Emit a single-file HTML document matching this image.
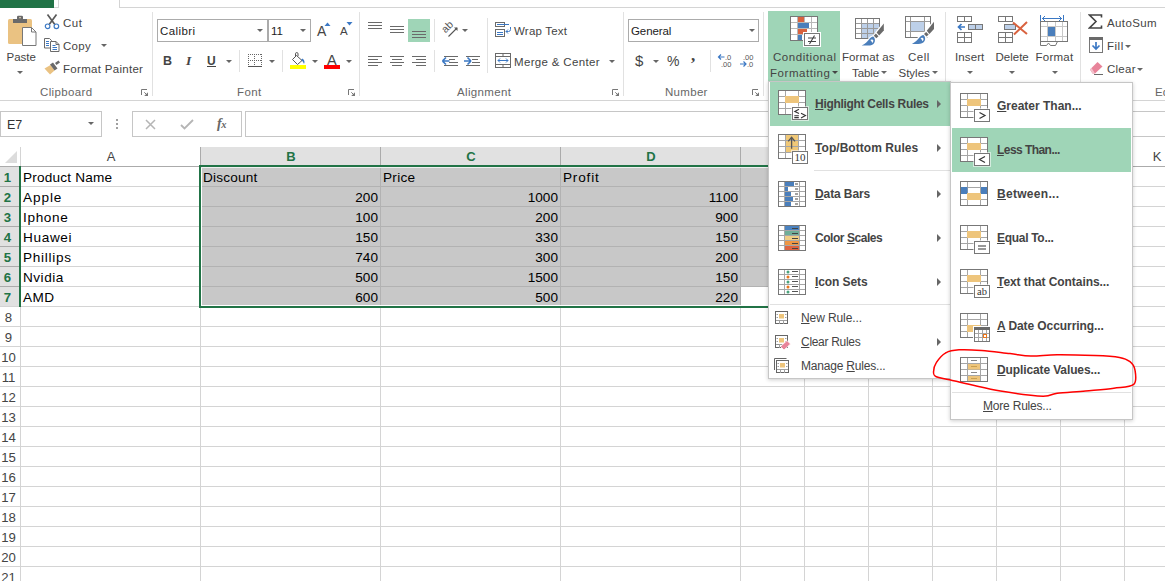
<!DOCTYPE html>
<html><head><meta charset="utf-8"><title>Excel</title>
<style>
*{box-sizing:border-box;margin:0;padding:0}
html,body{width:1165px;height:581px;overflow:hidden;background:#fff}
body{position:relative;font-family:"Liberation Sans",sans-serif;font-size:11.5px;color:#444}
.a{position:absolute}
.t{position:absolute;white-space:nowrap;line-height:14px;height:14px}
.lbl{color:#666}
.vs{position:absolute;width:1px;background:#e1e1e1}
.box{position:absolute;border:1px solid #ababab;background:#fff}
.dd{position:absolute;width:0;height:0;border-left:3px solid transparent;border-right:3px solid transparent;border-top:3px solid #666}
.cell{position:absolute;white-space:nowrap;font-size:13.6px;line-height:20px;height:20px;color:#000}
.num{text-align:right}
.rh{position:absolute;left:0;width:19px;text-align:center;font-size:13.2px;line-height:20px;height:20px;color:#444;margin-top:1px}
.rh.s{color:#217346;font-weight:bold}
.ch{position:absolute;top:147px;height:20px;line-height:20px;padding-left:2px;text-align:center;font-size:13px;color:#444}
.ch.s{color:#217346;font-weight:bold}
.menu{position:absolute;background:#fff;border:1px solid #c6c6c6;box-shadow:0 1px 4px rgba(0,0,0,.2)}
.mi{position:absolute;white-space:nowrap;line-height:16px;height:16px;font-size:12px;font-weight:bold;color:#444}
.mi u,.ms u{text-decoration:underline}
.ms{position:absolute;white-space:nowrap;line-height:16px;height:16px;font-size:12px;color:#444}
.arr{position:absolute;width:0;height:0;border-top:4px solid transparent;border-bottom:4px solid transparent;border-left:4px solid #666}
</style></head><body>
<!-- top strip -->
<div class="a" style="left:0;top:0;width:54px;height:8px;background:#217346"></div>
<div class="a" style="left:54px;top:7px;width:5px;height:1px;background:#d4d4d4"></div>
<div class="a" style="left:58px;top:0;width:1px;height:8px;background:#d4d4d4"></div>
<div class="a" style="left:119px;top:0;width:1px;height:8px;background:#d4d4d4"></div>
<div class="a" style="left:119px;top:7px;width:1046px;height:1px;background:#d4d4d4"></div>
<!-- ribbon bottom -->
<div class="a" style="left:0;top:100px;width:1165px;height:1px;background:#d4d4d4"></div>
<!-- group separators -->
<div class="vs" style="left:152px;top:12px;height:84px"></div>
<div class="vs" style="left:359px;top:12px;height:84px"></div>
<div class="vs" style="left:623px;top:12px;height:84px"></div>
<div class="vs" style="left:763px;top:12px;height:84px"></div>
<div class="vs" style="left:945px;top:12px;height:84px"></div>
<div class="vs" style="left:1080px;top:12px;height:84px"></div>
<!-- CLIPBOARD -->
<svg class="a" style="left:6px;top:15px" width="32" height="33" viewBox="0 0 32 33">
<rect x="2" y="4" width="24" height="25" rx="1.5" fill="#eac282"/>
<rect x="7" y="4" width="14" height="4" fill="#6a6a6a"/>
<rect x="11" y="0.8" width="6" height="4" rx="1.2" fill="#6a6a6a"/><rect x="13.3" y="2" width="1.4" height="1.3" fill="#f0e0c0"/>
<path d="M16.5 12.5h9l4.5 4.5v13.500h-13.500z" fill="#fff" stroke="#777" stroke-width="1"/>
<path d="M25.500 12.500v4.500h4.500" fill="none" stroke="#777" stroke-width="1"/>
</svg>
<div class="t" style="left:6.500px;top:50px;letter-spacing:0px">Paste</div>
<div class="dd" style="left:17px;top:71px"></div>
<!-- cut -->
<svg class="a" style="left:44px;top:14px" width="16" height="16" viewBox="0 0 16 16">
<path d="M3.500 0.500L10.800 10.500M12.500 0.500L5.200 10.500" stroke="#5a5a5a" stroke-width="1.700" fill="none"/>
<circle cx="3.600" cy="12.300" r="2.300" fill="#fff" stroke="#3b78c4" stroke-width="1.200"/>
<circle cx="12.400" cy="12.300" r="2.300" fill="#fff" stroke="#3b78c4" stroke-width="1.200"/>
</svg>
<div class="t" style="left:63px;top:16px;letter-spacing:.5px">Cut</div>
<!-- copy -->
<svg class="a" style="left:44px;top:38px" width="16" height="14" viewBox="0 0 16 14">
<path d="M0.500 0.500h5l2 2v7.500h-7z" fill="#fff" stroke="#6a6a6a"/>
<path d="M2 3.500h3M2 5.500h3M2 7.500h3" stroke="#3b78c4"/>
<path d="M6.500 3.500h5.500l3 3v7h-8.500z" fill="#fff" stroke="#6a6a6a"/>
<path d="M12 3.500v3h3" fill="none" stroke="#6a6a6a"/>
<path d="M8.500 7.500h3M8.500 9.500h4.500M8.500 11.500h4.500" stroke="#3b78c4"/>
</svg>
<div class="t" style="left:63px;top:39px;letter-spacing:.3px">Copy</div>
<div class="dd" style="left:100.500px;top:44px"></div>
<!-- format painter -->
<svg class="a" style="left:44px;top:60px" width="17" height="15" viewBox="0 0 17 15">
<path d="M0.500 8.500L6.500 5l4 5.500L6 14.500z" fill="#eac282"/>
<path d="M6 4.500l3-2 4.500 6-3 2z" fill="#6a6a6a"/>
<path d="M11 3l3.500-2.500 1.500 2L12.500 5z" fill="#6a6a6a"/>
</svg>
<div class="t" style="left:63px;top:62px;letter-spacing:.3px">Format Painter</div>
<div class="t lbl" style="left:40px;top:85px;letter-spacing:.35px">Clipboard</div>
<svg class="a" style="left:141px;top:89px" width="8" height="8" viewBox="0 0 8 8"><path d="M0.500 6V0.500H6" fill="none" stroke="#777"/><path d="M3.300 3.300L6 6" stroke="#777" fill="none"/><path d="M7 3.200V7H3.200z" fill="#777"/></svg>
<!-- FONT -->
<div class="box" style="left:157px;top:19px;width:111px;height:23px"></div>
<div class="box" style="left:268px;top:19px;width:43px;height:23px"></div>
<div class="t" style="left:160px;top:24px;color:#222;letter-spacing:.4px">Calibri</div>
<div class="dd" style="left:257px;top:29px"></div>
<div class="t" style="left:271px;top:24px;color:#222">11</div>
<div class="dd" style="left:300px;top:29px"></div>
<div class="t" style="left:317px;top:23px;font-size:14px;line-height:16px;height:16px">A</div>
<svg class="a" style="left:324px;top:22px" width="7" height="4"><path d="M0.500 4L3.500 0.500 6.500 4z" fill="#3b78c4"/></svg>
<div class="t" style="left:340px;top:24px;font-size:11.500px;line-height:14px">A</div>
<svg class="a" style="left:346px;top:22px" width="7" height="4"><path d="M0.500 0L3.500 3.500 6.500 0z" fill="#3b78c4"/></svg>
<div class="t" style="left:163px;top:54px;font-weight:bold;font-size:12.500px">B</div>
<div class="t" style="left:186px;top:54px;font-family:'Liberation Serif',serif;font-style:italic;font-weight:bold;font-size:13.500px">I</div>
<div class="t" style="left:207px;top:54px;font-weight:bold;font-size:12px">U</div>
<div class="a" style="left:207px;top:66px;width:9px;height:1px;background:#444"></div>
<div class="dd" style="left:226px;top:60px"></div>
<div class="vs" style="left:239px;top:50px;height:22px"></div>
<svg class="a" style="left:248px;top:54px" width="14" height="13" viewBox="0 0 14 13" shape-rendering="crispEdges">
<path d="M0 0.500h14M0 6.500h14" stroke="#666" stroke-width="1" stroke-dasharray="1 1" fill="none"/>
<path d="M0.500 0v12M6.500 0v12M13.500 0v12" stroke="#666" stroke-width="1" stroke-dasharray="1 1" fill="none"/>
<path d="M0 12.500h14" stroke="#555" stroke-width="1"/>
</svg>
<div class="dd" style="left:269px;top:60px"></div>
<div class="vs" style="left:282px;top:50px;height:22px"></div>
<svg class="a" style="left:290px;top:52px" width="17" height="17" viewBox="0 0 17 17">
<path d="M6.500 3.500L12 8.500 7.500 12.500 2.500 7.500z" fill="#fff" stroke="#555" stroke-width="1"/>
<path d="M5.500 5V1.800a1 1 0 0 1 2.500 0V4" fill="none" stroke="#555" stroke-width="1"/>
<path d="M12.500 6.500c2 1.500 2.500 3.500 1.500 5.500-0.500-1.500-1.500-3-3-4z" fill="#3b78c4"/>
<rect x="0" y="13" width="16" height="4" fill="#ffff00"/>
</svg>
<div class="dd" style="left:312px;top:60px"></div>
<div class="t" style="left:327px;top:53px;font-size:14.500px;line-height:14px">A</div>
<div class="a" style="left:324px;top:65px;width:16px;height:4px;background:#ff0000"></div>
<div class="dd" style="left:346px;top:60px"></div>
<div class="t lbl" style="left:237px;top:85px;letter-spacing:.4px">Font</div>
<svg class="a" style="left:348px;top:89px" width="8" height="8" viewBox="0 0 8 8"><path d="M0.500 6V0.500H6" fill="none" stroke="#777"/><path d="M3.300 3.300L6 6" stroke="#777" fill="none"/><path d="M7 3.200V7H3.200z" fill="#777"/></svg>
<!-- ALIGNMENT -->
<svg class="a" style="left:368px;top:19px" width="62" height="23" viewBox="0 0 62 23">
<rect x="40" y="0" width="22" height="23" fill="#9fd5b7"/>
<path d="M0 3.500h14M0 6.500h14M0 9.500h14M22 7.500h14M22 10.500h14M22 13.500h14M44 12.500h14M44 15.500h14M44 18.500h14" stroke="#6a6a6a" stroke-width="1" fill="none"/>
</svg>
<div class="vs" style="left:434px;top:19px;height:23px"></div>
<div class="vs" style="left:434px;top:50px;height:22px"></div>
<svg class="a" style="left:441px;top:21px" width="18" height="17" viewBox="0 0 18 17">
<text x="0" y="0" transform="translate(4.500 12.500) rotate(-45)" font-family="Liberation Sans, sans-serif" font-size="10.500" fill="#555">ab</text>
<path d="M7.500 15.500L16 7" stroke="#555" stroke-width="1.100" fill="none"/>
<path d="M13 6.500h3.500v3.500z" fill="#555"/>
</svg>
<div class="dd" style="left:462px;top:29px"></div>
<div class="vs" style="left:487px;top:18px;height:55px"></div>
<svg class="a" style="left:368px;top:55px" width="58" height="11" viewBox="0 0 58 11">
<path d="M0 1.500h14M0 4.500h10M0 7.500h14M0 10.500h10 M22 1.500h14M24 4.500h10M22 7.500h14M24 10.500h10 M44 1.500h14M48 4.500h10M44 7.500h14M48 10.500h10" stroke="#6a6a6a" stroke-width="1" fill="none"/>
</svg>
<svg class="a" style="left:442px;top:55px" width="38" height="11" viewBox="0 0 38 11">
<path d="M2 1.5h14M7 4.5h6M7 7.5h9M2 10.5h14 M24 1.5h14M30 4.5h6M30 7.5h8M24 10.5h14" stroke="#6a6a6a" stroke-width="1" fill="none"/>
<path d="M0.500 6L4 2.500M0.500 6L4 9.500M0.500 6H7.500" stroke="#3b78c4" stroke-width="1.600" fill="none"/>
<path d="M29 6L25.500 2.500M29 6L25.500 9.500M29 6H22" stroke="#3b78c4" stroke-width="1.600" fill="none"/>
</svg>
<!-- wrap text -->
<svg class="a" style="left:495px;top:22px" width="17" height="15" viewBox="0 0 17 15">
<rect x="0.500" y="0.500" width="9" height="4" fill="#fff" stroke="#6a6a6a"/>
<rect x="0.500" y="7.500" width="9" height="7" fill="#fff" stroke="#6a6a6a"/>
<path d="M2 2.500h12M2 10.500h6M2 12.500h6" stroke="#3b78c4" stroke-width="1"/>
<path d="M15.500 5v2.500a2 2 0 0 1-2 2H11M13 7.500L11 9.500l2 2" fill="none" stroke="#3b78c4" stroke-width="1"/>
</svg>
<div class="t" style="left:514px;top:23.500px;letter-spacing:.2px">Wrap Text</div>
<svg class="a" style="left:495px;top:53px" width="16" height="15" viewBox="0 0 16 15">
<rect x="0.500" y="0.500" width="15" height="14" fill="#fff" stroke="#6a6a6a"/>
<path d="M0.500 3.500h15M0.500 11.500h15M8 0.500v3M8 11.500v3" stroke="#6a6a6a" fill="none"/>
<path d="M3 7.500h10M5 5.500L3 7.500l2 2M11 5.500l2 2-2 2" stroke="#3b78c4" fill="none"/>
</svg>
<div class="t" style="left:514px;top:54.500px;letter-spacing:.33px">Merge &amp; Center</div>
<div class="dd" style="left:609px;top:60px"></div>
<div class="t lbl" style="left:457px;top:85px;letter-spacing:.35px">Alignment</div>
<svg class="a" style="left:612px;top:89px" width="8" height="8" viewBox="0 0 8 8"><path d="M0.500 6V0.500H6" fill="none" stroke="#777"/><path d="M3.300 3.300L6 6" stroke="#777" fill="none"/><path d="M7 3.200V7H3.200z" fill="#777"/></svg>
<!-- NUMBER -->
<div class="box" style="left:628px;top:19px;width:131px;height:23px"></div>
<div class="t" style="left:631px;top:23.500px;color:#222;letter-spacing:-.1px">General</div>
<div class="dd" style="left:749px;top:29px"></div>
<div class="t" style="left:635px;top:53px;font-size:15px;line-height:16px;height:16px">$</div>
<div class="dd" style="left:653px;top:60px"></div>
<div class="t" style="left:667px;top:53px;font-size:14px;line-height:16px;height:16px;letter-spacing:-1px">%</div>
<div class="t" style="left:691px;top:48px;font-size:17px;line-height:16px;height:16px;font-weight:bold;font-family:'Liberation Serif',serif">,</div>
<div class="vs" style="left:710px;top:50px;height:22px"></div>
<svg class="a" style="left:717px;top:53px" width="40" height="16" viewBox="0 0 40 16">
<g font-family="Liberation Sans, sans-serif" font-size="7.500" fill="#555">
<text x="8" y="7">.0</text><text x="4" y="14">.00</text>
<text x="26" y="7">.00</text><text x="30" y="14">.0</text></g>
<path d="M1.500 4H7.500M4 1.500L1.500 4 4 6.500" stroke="#3b78c4" stroke-width="1.200" fill="none"/>
<path d="M23 11H29M26.500 8.500L29 11l-2.500 2.500" stroke="#3b78c4" stroke-width="1.200" fill="none"/>
</svg>
<div class="t lbl" style="left:665px;top:85px;letter-spacing:.3px">Number</div>
<svg class="a" style="left:752px;top:89px" width="8" height="8" viewBox="0 0 8 8"><path d="M0.500 6V0.500H6" fill="none" stroke="#777"/><path d="M3.300 3.300L6 6" stroke="#777" fill="none"/><path d="M7 3.200V7H3.200z" fill="#777"/></svg>
<!-- STYLES -->
<div class="a" style="left:768px;top:11px;width:72px;height:72px;background:#9fd5b7"></div>
<svg class="a" style="left:789px;top:15px" width="33" height="32" viewBox="0 0 33 32">
<rect x="1.500" y="1.500" width="27" height="24" fill="#fff" stroke="#777"/>
<path d="M8.500 2v23M15.500 2v23M22.500 2v23M2 7.500h26M2 13.500h26M2 19.500h26" stroke="#b8b8b8" fill="none"/>
<rect x="9" y="2" width="6" height="5" fill="#d9623f"/>
<rect x="9" y="8" width="11" height="5" fill="#4a7ebb"/>
<rect x="9" y="14" width="9" height="5" fill="#d9623f"/>
<rect x="9" y="20" width="4" height="5" fill="#4a7ebb"/>
<rect x="14" y="17" width="18" height="15" fill="#fff"/>
<rect x="15.500" y="18.500" width="15" height="12" fill="#fff" stroke="#777"/>
<path d="M19 23h8M19 26.500h8M25.500 20.500L20.500 29" stroke="#444" stroke-width="1.100" fill="none"/>
</svg>
<div class="t" style="left:773px;top:50px;letter-spacing:.55px">Conditional</div>
<div class="t" style="left:770px;top:66px;letter-spacing:.55px">Formatting</div>
<div class="dd" style="left:832px;top:71px;border-top-color:#444"></div>
<!-- format as table -->
<svg class="a" style="left:854px;top:17px" width="32" height="30" viewBox="0 0 32 30">
<rect x="1.500" y="1.500" width="24" height="20" fill="#fff" stroke="#777"/>
<rect x="8" y="7" width="17" height="14" fill="#bdd0e9"/>
<path d="M7.500 2v19M13.500 2v19M19.500 2v19M2 6.500h23M2 11.500h23M2 16.500h23" stroke="#999" fill="none"/>
<rect x="22.500" y="18" width="4" height="4.500" fill="#fff"/><g stroke="#fff" stroke-width="2.600" stroke-linejoin="round" fill="#fff"><polygon points="29.8 6.5 29.8 13.6 25.2 18.6 22.6 15.5"/><polygon points="21.9 16.6 24.5 19.2 22.3 21.3 19.8 18.8"/><path d="M19.3 19.6C21.0 21.0 21.6 24.0 20.2 26.0C19.0 28.0 17.0 28.6 14.0 28.6H7.7C11.0 27.0 13.5 24.5 15.0 22.5C16.2 21.0 17.5 19.8 19.3 19.6z"/></g>
<polygon points="29.8 6.5 29.8 13.6 25.2 18.6 22.6 15.5" fill="#6a6a6a"/>
<polygon points="21.9 16.6 24.5 19.2 22.3 21.3 19.8 18.8" fill="#6a6a6a"/>
<path d="M19.3 19.6C21.0 21.0 21.6 24.0 20.2 26.0C19.0 28.0 17.0 28.6 14.0 28.6H7.7C11.0 27.0 13.5 24.5 15.0 22.5C16.2 21.0 17.5 19.8 19.3 19.6z" fill="#4a7ebb"/>
<path d="M16.2 23.0c1.200-1 2.800-0.600 3.200 0.600 0 1-0.400 1.800-1.200 2.300-0.400-1.300-1-2.200-2-2.900z" fill="#fff"/>
</svg>
<div class="t" style="left:842px;top:50px;letter-spacing:.1px">Format as</div>
<div class="t" style="left:852px;top:66px;letter-spacing:-.1px">Table</div>
<div class="dd" style="left:881px;top:71px"></div>
<!-- cell styles -->
<svg class="a" style="left:904px;top:15px" width="32" height="31" viewBox="0 0 32 31">
<rect x="1.500" y="1.500" width="25" height="21" fill="#fff" stroke="#777"/>
<rect x="7" y="7" width="13" height="9" fill="#bdd0e9"/>
<path d="M6.500 2v20M20.500 2v20M2 6.500h24M2 16.500h24" stroke="#999" fill="none"/>
<rect x="23.500" y="19" width="4" height="4.500" fill="#fff"/><g stroke="#fff" stroke-width="2.600" stroke-linejoin="round" fill="#fff"><polygon points="30.0 6.8 30.0 13.9 25.4 18.9 22.8 15.8"/><polygon points="22.1 16.9 24.7 19.5 22.5 21.6 20.0 19.1"/><path d="M19.5 19.9C21.2 21.3 21.8 24.3 20.4 26.3C19.2 28.3 17.2 28.9 14.2 28.9H7.9C11.2 27.3 13.7 24.8 15.2 22.8C16.4 21.3 17.7 20.1 19.5 19.9z"/></g>
<polygon points="30.0 6.8 30.0 13.9 25.4 18.9 22.8 15.8" fill="#6a6a6a"/>
<polygon points="22.1 16.9 24.7 19.5 22.5 21.6 20.0 19.1" fill="#6a6a6a"/>
<path d="M19.5 19.9C21.2 21.3 21.8 24.3 20.4 26.3C19.2 28.3 17.2 28.9 14.2 28.9H7.9C11.2 27.3 13.7 24.8 15.2 22.8C16.4 21.3 17.7 20.1 19.5 19.9z" fill="#4a7ebb"/>
<path d="M16.4 23.3c1.200-1 2.800-0.600 3.200 0.600 0 1-0.400 1.800-1.200 2.300-0.400-1.300-1-2.200-2-2.900z" fill="#fff"/>
</svg>
<div class="t" style="left:908px;top:50px;letter-spacing:.5px">Cell</div>
<div class="t" style="left:898.500px;top:66px;letter-spacing:0px">Styles</div>
<div class="dd" style="left:932px;top:71px"></div>
<!-- CELLS -->
<svg class="a" style="left:956px;top:15px" width="28" height="29" viewBox="0 0 28 29">
<rect x="1.500" y="1.500" width="14" height="5" fill="#fff" stroke="#777"/><path d="M8.500 2v5" stroke="#777"/>
<rect x="12.500" y="9.500" width="14" height="5" fill="#bdd0e9" stroke="#777"/><path d="M19.500 10v5" stroke="#777"/>
<rect x="1.500" y="17.500" width="14" height="10" fill="#fff" stroke="#777"/><path d="M8.500 18v10M2 22.500h14" stroke="#777"/>
<path d="M2.500 12H9M5.500 9L2.500 12l3 3" stroke="#3b78c4" stroke-width="1.700" fill="none"/>
</svg>
<div class="t" style="left:955px;top:50px;letter-spacing:.1px">Insert</div>
<div class="dd" style="left:967px;top:71px"></div>
<svg class="a" style="left:997px;top:15px" width="32" height="29" viewBox="0 0 32 29">
<rect x="1.500" y="1.500" width="14" height="5" fill="#fff" stroke="#777"/><path d="M8.500 2v5" stroke="#777"/>
<rect x="7.500" y="9.500" width="11" height="5" fill="#bdd0e9" stroke="#777"/>
<rect x="1.500" y="17.500" width="14" height="10" fill="#fff" stroke="#777"/><path d="M8.500 18v10M2 22.500h14" stroke="#777"/>
<path d="M16 7.500L30 19M30 7L17 19.500" stroke="#d9623f" stroke-width="2" fill="none"/>
</svg>
<div class="t" style="left:995.500px;top:50px;letter-spacing:0px">Delete</div>
<div class="dd" style="left:1009px;top:71px"></div>
<svg class="a" style="left:1039px;top:14px" width="30" height="32" viewBox="0 0 30 32">
<path d="M1.5 1v7M24.5 1v7M3 4.5h20M6 2L3.500 4.5l2.500 2.500M20 2L22.500 4.5l-2.500 2.500" stroke="#3b78c4" stroke-width="1" fill="none"/>
<rect x="1.500" y="7.500" width="27" height="20" fill="#fff" stroke="#777"/>
<path d="M8.500 8v19M16.500 8v19M23.500 8v19M2 12.500h26M2 22.500h26" stroke="#c8c8c8" fill="none"/>
<rect x="9" y="13" width="7" height="9" fill="#4a7ebb"/>
<path d="M1.500 27.500v4h6l2-2.500 2 2.500h5l2-4" stroke="#777" fill="none"/>
</svg>
<div class="t" style="left:1035.500px;top:50px;letter-spacing:.25px">Format</div>
<div class="dd" style="left:1052px;top:71px"></div>
<!-- EDITING -->
<svg class="a" style="left:1088px;top:14px" width="15" height="15" viewBox="0 0 15 15">
<path d="M13.500 3.500V1H1.500L8 7.500 1.500 14H13.500V11.500" stroke="#444" stroke-width="1.600" fill="none" stroke-linejoin="miter"/>
</svg>
<div class="t" style="left:1107px;top:16px;letter-spacing:.4px">AutoSum</div>
<svg class="a" style="left:1089px;top:37px" width="14" height="16" viewBox="0 0 14 16">
<rect x="0.500" y="0.500" width="13" height="15" fill="#fff" stroke="#777"/>
<rect x="0" y="0" width="14" height="3" fill="#6a6a6a"/>
<path d="M7 5v7M3.500 8.500L7 12l3.500-3.500" stroke="#3b78c4" stroke-width="1.700" fill="none"/>
</svg>
<div class="t" style="left:1107px;top:39px;letter-spacing:.5px">Fill</div>
<div class="dd" style="left:1124.500px;top:44.500px"></div>
<svg class="a" style="left:1089px;top:61px" width="15" height="14" viewBox="0 0 15 14">
<path d="M1 8.500L8.500 1l5 4.500L6 12.500H3.500z" fill="#e8849a"/>
<path d="M1 8.500l2.500 4H6L2.500 7z" fill="#f4c3cd"/>
<path d="M5 13.500h9" stroke="#6a6a6a"/>
</svg>
<div class="t" style="left:1107px;top:62px;letter-spacing:.25px">Clear</div>
<div class="dd" style="left:1137px;top:68px"></div>
<div class="t lbl" style="left:1155px;top:85px">Editing</div>



<div class="box" style="left:0px;top:111px;width:102px;height:26px;border-color:#c6c6c6"></div>
<div class="t" style="left:7px;top:117.500px;font-size:12.500px;color:#333">E7</div>
<div class="dd" style="left:88px;top:122px;border-left-width:3.500px;border-right-width:3.500px;border-top-width:3.500px"></div>
<div class="a" style="left:116px;top:119px;width:2px;height:2px;background:#a0a0a0;box-shadow:0 4px 0 #a0a0a0,0 8px 0 #a0a0a0"></div>
<div class="box" style="left:132px;top:111px;width:110px;height:26px;border-color:#c6c6c6"></div>
<svg class="a" style="left:145px;top:119px" width="11" height="11" viewBox="0 0 11 11"><path d="M1 1l9 9M10 1l-9 9" stroke="#b5b5b5" stroke-width="1.500" fill="none"/></svg>
<svg class="a" style="left:180px;top:119px" width="14" height="11" viewBox="0 0 14 11"><path d="M1 6l3.500 3.500L13 1" stroke="#b5b5b5" stroke-width="1.800" fill="none"/></svg>
<div class="t" style="left:217px;top:116px;font-family:'Liberation Serif',serif;font-style:italic;font-weight:bold;font-size:14px;line-height:16px;height:16px;color:#666;letter-spacing:-.5px">f<span style="font-size:10.500px">x</span></div>
<div class="box" style="left:245px;top:111px;width:930px;height:26px;border-color:#c6c6c6"></div>

<div class="a" style="left:200px;top:147px;width:568px;height:18px;background:#e1e1e1"></div>
<div class="a" style="left:0;top:167px;width:19px;height:140px;background:#e1e1e1"></div>
<div class="a" style="left:202px;top:168px;width:566px;height:137px;background:#c8c8c8"></div>
<div class="a" style="left:741px;top:287px;width:40px;height:19px;background:#fff"></div>
<div class="a" style="left:0;top:186px;width:1165px;height:1px;background:#d4d4d4"></div>
<div class="a" style="left:0;top:206px;width:1165px;height:1px;background:#d4d4d4"></div>
<div class="a" style="left:0;top:226px;width:1165px;height:1px;background:#d4d4d4"></div>
<div class="a" style="left:0;top:246px;width:1165px;height:1px;background:#d4d4d4"></div>
<div class="a" style="left:0;top:266px;width:1165px;height:1px;background:#d4d4d4"></div>
<div class="a" style="left:0;top:286px;width:1165px;height:1px;background:#d4d4d4"></div>
<div class="a" style="left:0;top:306px;width:1165px;height:1px;background:#d4d4d4"></div>
<div class="a" style="left:0;top:326px;width:1165px;height:1px;background:#d4d4d4"></div>
<div class="a" style="left:0;top:346px;width:1165px;height:1px;background:#d4d4d4"></div>
<div class="a" style="left:0;top:366px;width:1165px;height:1px;background:#d4d4d4"></div>
<div class="a" style="left:0;top:386px;width:1165px;height:1px;background:#d4d4d4"></div>
<div class="a" style="left:0;top:406px;width:1165px;height:1px;background:#d4d4d4"></div>
<div class="a" style="left:0;top:426px;width:1165px;height:1px;background:#d4d4d4"></div>
<div class="a" style="left:0;top:446px;width:1165px;height:1px;background:#d4d4d4"></div>
<div class="a" style="left:0;top:466px;width:1165px;height:1px;background:#d4d4d4"></div>
<div class="a" style="left:0;top:486px;width:1165px;height:1px;background:#d4d4d4"></div>
<div class="a" style="left:0;top:506px;width:1165px;height:1px;background:#d4d4d4"></div>
<div class="a" style="left:0;top:526px;width:1165px;height:1px;background:#d4d4d4"></div>
<div class="a" style="left:0;top:546px;width:1165px;height:1px;background:#d4d4d4"></div>
<div class="a" style="left:0;top:566px;width:1165px;height:1px;background:#d4d4d4"></div>
<div class="a" style="left:0;top:586px;width:1165px;height:1px;background:#d4d4d4"></div>
<div class="a" style="left:202px;top:186px;width:566px;height:1px;background:#b2b2b2"></div>
<div class="a" style="left:0;top:186px;width:19px;height:1px;background:#ababab"></div>
<div class="a" style="left:202px;top:206px;width:566px;height:1px;background:#b2b2b2"></div>
<div class="a" style="left:0;top:206px;width:19px;height:1px;background:#ababab"></div>
<div class="a" style="left:202px;top:226px;width:566px;height:1px;background:#b2b2b2"></div>
<div class="a" style="left:0;top:226px;width:19px;height:1px;background:#ababab"></div>
<div class="a" style="left:202px;top:246px;width:566px;height:1px;background:#b2b2b2"></div>
<div class="a" style="left:0;top:246px;width:19px;height:1px;background:#ababab"></div>
<div class="a" style="left:202px;top:266px;width:566px;height:1px;background:#b2b2b2"></div>
<div class="a" style="left:0;top:266px;width:19px;height:1px;background:#ababab"></div>
<div class="a" style="left:202px;top:286px;width:566px;height:1px;background:#b2b2b2"></div>
<div class="a" style="left:0;top:286px;width:19px;height:1px;background:#ababab"></div>
<div class="a" style="left:200px;top:167px;width:1px;height:414px;background:#d4d4d4"></div>
<div class="a" style="left:380px;top:167px;width:1px;height:414px;background:#d4d4d4"></div>
<div class="a" style="left:560px;top:167px;width:1px;height:414px;background:#d4d4d4"></div>
<div class="a" style="left:740px;top:167px;width:1px;height:414px;background:#d4d4d4"></div>
<div class="a" style="left:804px;top:167px;width:1px;height:414px;background:#d4d4d4"></div>
<div class="a" style="left:868px;top:167px;width:1px;height:414px;background:#d4d4d4"></div>
<div class="a" style="left:932px;top:167px;width:1px;height:414px;background:#d4d4d4"></div>
<div class="a" style="left:996px;top:167px;width:1px;height:414px;background:#d4d4d4"></div>
<div class="a" style="left:1060px;top:167px;width:1px;height:414px;background:#d4d4d4"></div>
<div class="a" style="left:1124px;top:167px;width:1px;height:414px;background:#d4d4d4"></div>
<div class="a" style="left:380px;top:168px;width:1px;height:137px;background:#b2b2b2"></div>
<div class="a" style="left:380px;top:147px;width:1px;height:18px;background:#ababab"></div>
<div class="a" style="left:560px;top:168px;width:1px;height:137px;background:#b2b2b2"></div>
<div class="a" style="left:560px;top:147px;width:1px;height:18px;background:#ababab"></div>
<div class="a" style="left:740px;top:168px;width:1px;height:137px;background:#b2b2b2"></div>
<div class="a" style="left:740px;top:147px;width:1px;height:18px;background:#ababab"></div>
<div class="a" style="left:200px;top:147px;width:1px;height:18px;background:#ababab"></div>
<div class="a" style="left:1124px;top:147px;width:1px;height:19px;background:#d4d4d4"></div>
<div class="a" style="left:20px;top:147px;width:1px;height:434px;background:#d4d4d4"></div>
<div class="a" style="left:0;top:166px;width:1165px;height:1px;background:#ababab"></div>
<div class="a" style="left:200px;top:165px;width:569px;height:2px;background:#217346"></div>
<div class="a" style="left:19px;top:166px;width:2px;height:141px;background:#217346"></div>
<div class="a" style="left:201px;top:167px;width:1px;height:139px;background:#fff"></div>
<div class="a" style="left:201px;top:305px;width:567px;height:1px;background:#fff"></div>
<div class="a" style="left:201px;top:167px;width:567px;height:1px;background:#f0f0f0"></div>
<div class="a" style="left:199px;top:165px;width:2px;height:143px;background:#217346"></div>
<div class="a" style="left:199px;top:306px;width:570px;height:2px;background:#217346"></div>
<svg class="a" style="left:5px;top:150px" width="13" height="14"><polygon points="12,1 12,13 0,13" fill="#dcdcdc"/></svg>
<div class="ch" style="left:20px;width:180px">A</div>
<div class="ch s" style="left:200px;width:180px">B</div>
<div class="ch s" style="left:380px;width:180px">C</div>
<div class="ch s" style="left:560px;width:180px">D</div>
<div class="ch" style="left:1124px;width:64px">K</div>
<div class="rh s" style="top:167px;width:15px">1</div>
<div class="rh s" style="top:187px;width:15px">2</div>
<div class="rh s" style="top:207px;width:15px">3</div>
<div class="rh s" style="top:227px;width:15px">4</div>
<div class="rh s" style="top:247px;width:15px">5</div>
<div class="rh s" style="top:267px;width:15px">6</div>
<div class="rh s" style="top:287px;width:15px">7</div>
<div class="rh" style="top:307px;width:17px">8</div>
<div class="rh" style="top:327px;width:17px">9</div>
<div class="rh" style="top:347px;width:17px">10</div>
<div class="rh" style="top:367px;width:17px">11</div>
<div class="rh" style="top:387px;width:17px">12</div>
<div class="rh" style="top:407px;width:17px">13</div>
<div class="rh" style="top:427px;width:17px">14</div>
<div class="rh" style="top:447px;width:17px">15</div>
<div class="rh" style="top:467px;width:17px">16</div>
<div class="rh" style="top:487px;width:17px">17</div>
<div class="rh" style="top:507px;width:17px">18</div>
<div class="rh" style="top:527px;width:17px">19</div>
<div class="rh" style="top:547px;width:17px">20</div>
<div class="rh" style="top:567px;width:17px">21</div>
<div class="cell" style="left:23px;top:168px;letter-spacing:0.2px">Product Name</div>
<div class="cell" style="left:203px;top:168px;letter-spacing:0.2px">Discount</div>
<div class="cell" style="left:383px;top:168px;letter-spacing:0.3px">Price</div>
<div class="cell" style="left:563px;top:168px;letter-spacing:0.8px">Profit</div>
<div class="cell" style="left:23px;top:188px;letter-spacing:0.9px">Apple</div>
<div class="cell num" style="left:200px;top:188px;width:178px">200</div>
<div class="cell num" style="left:380px;top:188px;width:178px">1000</div>
<div class="cell num" style="left:560px;top:188px;width:178px">1100</div>
<div class="cell" style="left:23px;top:208px;letter-spacing:0.65px">Iphone</div>
<div class="cell num" style="left:200px;top:208px;width:178px">100</div>
<div class="cell num" style="left:380px;top:208px;width:178px">200</div>
<div class="cell num" style="left:560px;top:208px;width:178px">900</div>
<div class="cell" style="left:23px;top:228px;letter-spacing:0.65px">Huawei</div>
<div class="cell num" style="left:200px;top:228px;width:178px">150</div>
<div class="cell num" style="left:380px;top:228px;width:178px">330</div>
<div class="cell num" style="left:560px;top:228px;width:178px">150</div>
<div class="cell" style="left:23px;top:248px;letter-spacing:0.7px">Phillips</div>
<div class="cell num" style="left:200px;top:248px;width:178px">740</div>
<div class="cell num" style="left:380px;top:248px;width:178px">300</div>
<div class="cell num" style="left:560px;top:248px;width:178px">200</div>
<div class="cell" style="left:23px;top:268px;letter-spacing:0.5px">Nvidia</div>
<div class="cell num" style="left:200px;top:268px;width:178px">500</div>
<div class="cell num" style="left:380px;top:268px;width:178px">1500</div>
<div class="cell num" style="left:560px;top:268px;width:178px">150</div>
<div class="cell" style="left:23px;top:288px;letter-spacing:0.4px">AMD</div>
<div class="cell num" style="left:200px;top:288px;width:178px">600</div>
<div class="cell num" style="left:380px;top:288px;width:178px">500</div>
<div class="cell num" style="left:560px;top:288px;width:178px">220</div>
<div class="menu" style="left:768px;top:81px;width:183px;height:298px"></div>
<div class="a" style="left:770px;top:82px;width:180px;height:44px;background:#9fd5b7"></div>
<svg class="a" style="left:778px;top:90px" width="32" height="31" viewBox="0 0 32 31"><rect x="0.500" y="0.500" width="27" height="24" fill="#fff" stroke="#777"/><path d="M7.500 1v24M20.500 1v24M1 6.500h27M1 12.500h27M1 18.500h27" stroke="#a6a6a6" fill="none"/><rect x="7" y="6" width="14" height="7" fill="#eec57c"/><rect x="0.500" y="0.500" width="27" height="24" fill="none" stroke="#777"/><g transform="translate(0 1)"><rect x="13" y="15" width="18" height="15" fill="#fff" fill-opacity=".55"/><rect x="14.500" y="16.500" width="15" height="12" fill="#fff" stroke="#777"/><path d="M21 18.300L16.800 20.400 21 22.600M16.300 24.800h4.500M16.300 26.600h4.500M23 22.300L27.500 24.600 23 26.900" stroke="#333" fill="none" stroke-width="1.100"/></g></svg>
<svg class="a" style="left:778px;top:134px" width="32" height="31" viewBox="0 0 32 31"><rect x="0.500" y="0.500" width="27" height="24" fill="#fff" stroke="#777"/><rect x="7.500" y="1" width="13" height="17.500" fill="#f0c877"/><path d="M7.500 1v24M20.500 1v24M1 6.500h27M1 12.500h27M1 18.500h27" stroke="#a6a6a6" fill="none"/><rect x="0.500" y="0.500" width="27" height="24" fill="none" stroke="#777"/><path d="M13.600 14.700V3.500M10.200 7.400L13.600 3.300 17 7.400" stroke="#555" stroke-width="1.300" fill="none"/><rect x="13" y="16" width="18" height="15" fill="#fff" fill-opacity=".55"/><rect x="14.500" y="17.500" width="15" height="12" fill="#fff" stroke="#777"/><text x="22" y="27.300" text-anchor="middle" font-family="Liberation Serif, serif" font-size="11" fill="#333">10</text></svg>
<svg class="a" style="left:778px;top:181px" width="29" height="27" viewBox="0 0 29 27"><rect x="0.500" y="0.500" width="27" height="25" fill="#fff" stroke="#777"/><rect x="7" y="1" width="9" height="4.500" fill="#4a7ebb"/><path d="M17 3h3" stroke="#444"/><rect x="7" y="6" width="3" height="4.500" fill="#4a7ebb"/><path d="M17 8h3" stroke="#444"/><rect x="7" y="11" width="6" height="4.500" fill="#4a7ebb"/><path d="M17 13h3" stroke="#444"/><rect x="7" y="16" width="8" height="4.500" fill="#4a7ebb"/><path d="M17 18h3" stroke="#444"/><rect x="7" y="21" width="6" height="4.500" fill="#4a7ebb"/><path d="M17 23h3" stroke="#444"/><path d="M6.500 1v25M21.500 1v25M1 5.500h27M1 10.500h27M1 15.500h27M1 20.500h27" stroke="#a6a6a6" fill="none"/><rect x="0.500" y="0.500" width="27" height="25" fill="none" stroke="#777"/></svg>
<svg class="a" style="left:778px;top:225px" width="29" height="27" viewBox="0 0 29 27"><rect x="0.500" y="0.500" width="27" height="25" fill="#fff" stroke="#777"/><rect x="7" y="1" width="14.500" height="4.500" fill="#4a82c0"/><path d="M14 3.5h6" stroke="#444"/><rect x="7" y="6" width="14.500" height="4.500" fill="#6fae98"/><path d="M14 8.5h6" stroke="#444"/><rect x="7" y="11" width="14.500" height="4.500" fill="#f0cd84"/><path d="M14 13.5h6" stroke="#444"/><rect x="7" y="16" width="14.500" height="4.500" fill="#ee9644"/><path d="M14 18.5h6" stroke="#444"/><rect x="7" y="21" width="14.500" height="4.500" fill="#dd6340"/><path d="M14 23.5h6" stroke="#444"/><path d="M6.500 1v25M21.500 1v25M1 5.500h27M1 10.500h27M1 15.500h27M1 20.500h27" stroke="#a6a6a6" fill="none"/><rect x="0.500" y="0.500" width="27" height="25" fill="none" stroke="#777"/></svg>
<svg class="a" style="left:778px;top:269px" width="29" height="27" viewBox="0 0 29 27"><rect x="0.500" y="0.500" width="27" height="25" fill="#fff" stroke="#777"/><circle cx="10" cy="3" r="1.500" fill="#4aa37c"/><path d="M14 2.5h6" stroke="#555"/><circle cx="10" cy="8" r="1.500" fill="#e8761c"/><path d="M14 7.5h6" stroke="#555"/><circle cx="10" cy="13" r="1.500" fill="#4aa37c"/><path d="M14 12.5h6" stroke="#555"/><circle cx="10" cy="18" r="1.500" fill="#e8761c"/><path d="M14 17.5h6" stroke="#555"/><circle cx="10" cy="23" r="1.500" fill="#4aa37c"/><path d="M14 22.5h6" stroke="#555"/><path d="M6.500 1v25M21.500 1v25M1 5.500h27M1 10.500h27M1 15.500h27M1 20.500h27" stroke="#a6a6a6" fill="none"/><rect x="0.500" y="0.500" width="27" height="25" fill="none" stroke="#777"/></svg>
<div class="mi" style="left:815px;top:96px;letter-spacing:-0.3px"><u>H</u>ighlight Cells Rules</div>
<div class="arr" style="left:937px;top:100px"></div>
<div class="mi" style="left:815px;top:140px;letter-spacing:0.05px"><u>T</u>op/Bottom Rules</div>
<div class="arr" style="left:937px;top:144px"></div>
<div class="mi" style="left:815px;top:186px;letter-spacing:-0.1px"><u>D</u>ata Bars</div>
<div class="arr" style="left:937px;top:190px"></div>
<div class="mi" style="left:815px;top:230px;letter-spacing:-0.45px">Color <u>S</u>cales</div>
<div class="arr" style="left:937px;top:234px"></div>
<div class="mi" style="left:815px;top:274px;letter-spacing:-0.1px"><u>I</u>con Sets</div>
<div class="arr" style="left:937px;top:278px"></div>
<div class="a" style="left:814px;top:170px;width:136px;height:1px;background:#e1e1e1"></div>
<div class="a" style="left:770px;top:304px;width:180px;height:1px;background:#e1e1e1"></div>
<svg class="a" style="left:774px;top:311px" width="18" height="17" viewBox="0 0 18 17"><rect x="1.5" y="0.5" width="12" height="12" fill="#fff" stroke="#666"/><rect x="5" y="3" width="5" height="4.500" fill="#eec57c"/><path d="M2 9.5h11M5.5 9.5v3.500M9.5 9.5v3.500" stroke="#a0a0a0" fill="none"/><path d="M2.5 3.5h1.500M2.5 6.5h1.500M11 3.5h1.500M11 6.5h1.500" stroke="#a0a0a0" fill="none"/></svg>
<svg class="a" style="left:774px;top:335px" width="18" height="17" viewBox="0 0 18 17"><rect x="1.5" y="0.5" width="12" height="12" fill="#fff" stroke="#666"/><rect x="5" y="3" width="5" height="4.500" fill="#eec57c"/><path d="M2 9.5h11M5.5 9.5v3.500M9.5 9.5v3.500" stroke="#a0a0a0" fill="none"/><path d="M2.5 3.5h1.500M2.5 6.5h1.500M11 3.5h1.500M11 6.5h1.500" stroke="#a0a0a0" fill="none"/><path d="M3.500 9.500h1M4 9v1" stroke="#888" fill="none" stroke-width=".8"/><path d="M6.500 11.500l6.500-6 3.500 3.500-6.500 6z" fill="#e8849a" stroke="#fff" stroke-width=".8"/></svg>
<svg class="a" style="left:774px;top:358px" width="18" height="17" viewBox="0 0 18 17"><path d="M0.500 12V0.500H12.500" stroke="#666" fill="none"/><rect x="2.5" y="2.5" width="12" height="12" fill="#fff" stroke="#666"/><rect x="6" y="5" width="5" height="4.500" fill="#eec57c"/><path d="M3 11.5h11M6.5 11.5v3.500M10.5 11.5v3.500" stroke="#a0a0a0" fill="none"/><path d="M3.5 5.5h1.500M3.5 8.5h1.500M12 5.5h1.500M12 8.5h1.500" stroke="#a0a0a0" fill="none"/></svg>
<div class="ms" style="left:801px;top:310px;letter-spacing:-0.1px"><u>N</u>ew Rule...</div>
<div class="ms" style="left:801px;top:334px;letter-spacing:-0.3px"><u>C</u>lear Rules</div>
<div class="ms" style="left:801px;top:358px;letter-spacing:-0.2px">Manage <u>R</u>ules...</div>
<div class="arr" style="left:937px;top:338px"></div>
<div class="menu" style="left:950px;top:82px;width:183px;height:338px"></div>
<div class="a" style="left:952px;top:128px;width:179px;height:44px;background:#9fd5b7"></div>
<svg class="a" style="left:960px;top:93px" width="32" height="31" viewBox="0 0 32 31"><rect x="0.500" y="0.500" width="27" height="24" fill="#fff" stroke="#777"/><path d="M7.500 1v24M20.500 1v24M1 6.500h27M1 12.500h27M1 18.500h27" stroke="#a6a6a6" fill="none"/><rect x="7" y="6" width="14" height="7" fill="#eec57c"/><rect x="0.500" y="0.500" width="27" height="24" fill="none" stroke="#777"/><g transform="translate(0 0)"><rect x="13" y="15" width="18" height="15" fill="#fff" fill-opacity=".55"/><rect x="14.500" y="16.500" width="15" height="12" fill="#fff" stroke="#777"/><path d="M19.500 19.500L25 22.500 19.500 25.500" stroke="#333" fill="none" stroke-width="1.200"/></g></svg>
<svg class="a" style="left:960px;top:137px" width="32" height="31" viewBox="0 0 32 31"><rect x="0.500" y="0.500" width="27" height="24" fill="#fff" stroke="#777"/><path d="M7.500 1v24M20.500 1v24M1 6.500h27M1 12.500h27M1 18.500h27" stroke="#a6a6a6" fill="none"/><rect x="7" y="6" width="14" height="7" fill="#eec57c"/><rect x="0.500" y="0.500" width="27" height="24" fill="none" stroke="#777"/><g transform="translate(0 0)"><rect x="13" y="15" width="18" height="15" fill="#fff" fill-opacity=".55"/><rect x="14.500" y="16.500" width="15" height="12" fill="#fff" stroke="#777"/><path d="M25 19.500L19.500 22.500 25 25.500" stroke="#333" fill="none" stroke-width="1.200"/></g></svg>
<svg class="a" style="left:960px;top:181px" width="32" height="31" viewBox="0 0 32 31"><rect x="0.500" y="0.500" width="27" height="24" fill="#fff" stroke="#777"/><path d="M7.500 1v24M20.500 1v24M1 6.500h27M1 12.500h27M1 18.500h27" stroke="#a6a6a6" fill="none"/><rect x="1" y="6" width="6.5" height="7" fill="#4a7ebb"/><rect x="21" y="6" width="6.5" height="7" fill="#4a7ebb"/><rect x="7" y="12" width="14" height="7" fill="#eec57c"/><rect x="0.500" y="0.500" width="27" height="24" fill="none" stroke="#777"/></svg>
<svg class="a" style="left:960px;top:225px" width="32" height="31" viewBox="0 0 32 31"><rect x="0.500" y="0.500" width="27" height="24" fill="#fff" stroke="#777"/><path d="M7.500 1v24M20.500 1v24M1 6.500h27M1 12.500h27M1 18.500h27" stroke="#a6a6a6" fill="none"/><rect x="7" y="6" width="14" height="7" fill="#eec57c"/><rect x="0.500" y="0.500" width="27" height="24" fill="none" stroke="#777"/><g transform="translate(0 0)"><rect x="13" y="15" width="18" height="15" fill="#fff" fill-opacity=".55"/><rect x="14.500" y="16.500" width="15" height="12" fill="#fff" stroke="#777"/><path d="M18 21h8M18 24h8" stroke="#333" fill="none" stroke-width="1.200"/></g></svg>
<svg class="a" style="left:960px;top:269px" width="32" height="31" viewBox="0 0 32 31"><rect x="0.500" y="0.500" width="27" height="24" fill="#fff" stroke="#777"/><path d="M7.500 1v24M20.500 1v24M1 6.500h27M1 12.500h27M1 18.500h27" stroke="#a6a6a6" fill="none"/><rect x="7" y="6" width="14" height="7" fill="#eec57c"/><rect x="0.500" y="0.500" width="27" height="24" fill="none" stroke="#777"/><g transform="translate(0 0)"><rect x="13" y="15" width="18" height="15" fill="#fff" fill-opacity=".55"/><rect x="14.500" y="16.500" width="15" height="12" fill="#fff" stroke="#777"/><text x="22" y="26" text-anchor="middle" font-family="Liberation Serif, serif" font-size="10.500" fill="#333">ab</text></g></svg>
<svg class="a" style="left:960px;top:313px" width="32" height="31" viewBox="0 0 32 31"><rect x="0.500" y="0.500" width="27" height="24" fill="#fff" stroke="#777"/><path d="M7.500 1v24M20.500 1v24M1 6.500h27M1 12.500h27M1 18.500h27" stroke="#a6a6a6" fill="none"/><rect x="7" y="12" width="14" height="7" fill="#eec57c"/><rect x="0.500" y="0.500" width="27" height="24" fill="none" stroke="#777"/><rect x="13" y="13" width="18" height="17" fill="#fff"/><rect x="14.500" y="14.500" width="15" height="14" fill="#fff" stroke="#777"/><rect x="14" y="14" width="16" height="3" fill="#6a6a6a"/><path d="M18.500 17v11M22.500 17v11M26.500 17v11M15 20.500h14M15 24.500h14" stroke="#a6a6a6" fill="none"/><rect x="23.500" y="21.500" width="3" height="3" fill="#fff" stroke="#e8761c"/></svg>
<svg class="a" style="left:960px;top:357px" width="30" height="26" viewBox="0 0 30 26"><rect x="0.500" y="0.500" width="27" height="24" fill="#fff" stroke="#777"/><path d="M7.500 1v24M20.500 1v24M1 6.500h27M1 12.500h27M1 18.500h27" stroke="#a6a6a6" fill="none"/><rect x="8" y="7" width="12" height="5.500" fill="#eec57c"/><rect x="8" y="19" width="12" height="5.500" fill="#eec57c"/><path d="M11 3.500h6M11 15.500h6" stroke="#888"/><path d="M11 9.500h6M11 21.500h6" stroke="#c9a050"/><rect x="0.500" y="0.500" width="27" height="24" fill="none" stroke="#777"/></svg>
<div class="mi" style="left:997px;top:98px;letter-spacing:0px"><u>G</u>reater Than...</div>
<div class="mi" style="left:997px;top:142px;letter-spacing:-0.55px"><u>L</u>ess Than...</div>
<div class="mi" style="left:997px;top:186px;letter-spacing:0.3px"><u>B</u>etween...</div>
<div class="mi" style="left:997px;top:230px;letter-spacing:-0.3px"><u>E</u>qual To...</div>
<div class="mi" style="left:997px;top:274px;letter-spacing:-0.07px"><u>T</u>ext that Contains...</div>
<div class="mi" style="left:997px;top:318px;letter-spacing:-0.08px"><u>A</u> Date Occurring...</div>
<div class="mi" style="left:997px;top:362px;letter-spacing:-0.12px"><u>D</u>uplicate Values...</div>
<div class="a" style="left:952px;top:392px;width:179px;height:1px;background:#e1e1e1"></div>
<div class="ms" style="left:983px;top:398px;letter-spacing:-.2px"><u>M</u>ore Rules...</div>
<svg class="a" style="left:0;top:0" width="1165" height="581" viewBox="0 0 1165 581"><path d="M945.8 352.8C949.6 350.7 953.0 350.2 959.0 349.8C965.0 349.4 973.2 349.8 981.7 350.4C990.2 351.0 1001.8 352.7 1010.0 353.6C1018.2 354.5 1023.0 355.8 1030.8 356.0C1038.6 356.2 1046.3 354.8 1057.0 354.7C1067.7 354.6 1084.6 355.1 1095.0 355.5C1105.4 355.9 1113.7 356.4 1119.5 357.4C1125.3 358.4 1127.4 359.6 1130.0 361.7C1132.6 363.8 1134.4 366.4 1135.0 370.2C1135.6 374.0 1137.2 381.4 1133.7 384.4C1130.2 387.4 1121.9 387.1 1113.9 388.2C1105.9 389.3 1095.0 390.1 1085.5 391.0C1076.0 391.9 1063.8 392.4 1057.2 393.3C1050.6 394.2 1050.3 395.8 1045.9 396.1C1041.5 396.4 1038.4 396.2 1030.8 395.3C1023.2 394.4 1010.3 392.7 1000.5 391.0C990.7 389.3 980.7 386.9 972.2 385.0C963.7 383.1 955.6 381.1 949.6 379.7C943.6 378.3 939.0 378.1 936.3 376.8C933.6 375.5 933.5 374.5 933.5 372.1C933.5 369.8 934.2 365.9 936.3 362.7C938.3 359.5 942.0 354.9 945.8 352.8" fill="none" stroke="#f00" stroke-width="1.500" stroke-linecap="round"/></svg>
</body></html>
